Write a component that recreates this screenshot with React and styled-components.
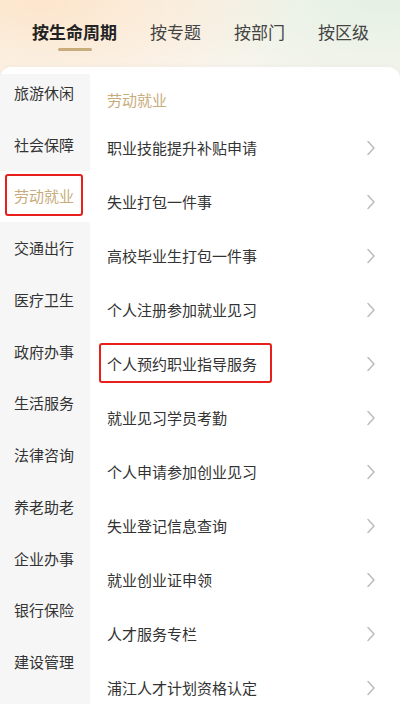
import styled, { createGlobalStyle } from "styled-components";

const GOLD = "#c8ac7c";

const tabs = ["按生命周期", "按专题", "按部门", "按区级"];

const categories = [
  "旅游休闲",
  "社会保障",
  "劳动就业",
  "交通出行",
  "医疗卫生",
  "政府办事",
  "生活服务",
  "法律咨询",
  "养老助老",
  "企业办事",
  "银行保险",
  "建设管理",
];

const services = [
  "职业技能提升补贴申请",
  "失业打包一件事",
  "高校毕业生打包一件事",
  "个人注册参加就业见习",
  "个人预约职业指导服务",
  "就业见习学员考勤",
  "个人申请参加创业见习",
  "失业登记信息查询",
  "就业创业证申领",
  "人才服务专栏",
  "浦江人才计划资格认定",
];

const Global = createGlobalStyle`
  html, body {
    margin: 0;
    padding: 0;
    background: #ffffff;
  }
  body {
    font-family: "Noto Sans CJK SC", "Noto Sans", sans-serif;
    color: #333333;
  }
`;

const Chevron = () => (
  <svg width="10" height="16" viewBox="0 0 10 16" fill="none">
    <polyline
      points="2,1.5 8,8 2,14.5"
      stroke="#bcbcbc"
      strokeWidth="1.5"
      strokeLinecap="round"
      strokeLinejoin="round"
    />
  </svg>
);

export default function App() {
  const active = 2;
  const marked = 4;

  return (
    <Page>
      <Global />
      <TabBar>
        {tabs.map((t, i) => (
          <Tab key={t} $active={i === 0}>
            {t}
          </Tab>
        ))}
      </TabBar>
      <Card>
        <Sidebar>
          {categories.map((c, i) => (
            <SideItem key={c} $active={i === active}>
              <SideLabel $marked={i === active}>{c}</SideLabel>
            </SideItem>
          ))}
        </Sidebar>
        <Content>
          <SectionTitle>{categories[active]}</SectionTitle>
          {services.map((s, i) => (
            <Row key={s}>
              <RowLabel $marked={i === marked}>{s}</RowLabel>
              <Chevron />
            </Row>
          ))}
        </Content>
      </Card>
    </Page>
  );
}

const Page = styled.div`
  width: 400px;
  height: 704px;
  overflow: hidden;
  display: flex;
  flex-direction: column;
  background:
    radial-gradient(ellipse 260px 110px at 40px 0px, rgba(253, 226, 196, 0.85), rgba(253, 226, 196, 0) 100%),
    radial-gradient(ellipse 240px 110px at 380px 0px, rgba(226, 240, 226, 0.9), rgba(226, 240, 226, 0) 100%),
    linear-gradient(#faf6f0, #f8f4ef);
`;

const TabBar = styled.div`
  height: 67px;
  flex-shrink: 0;
  display: flex;
  gap: 33px;
  padding-left: 32px;
  box-sizing: border-box;
`;

const Tab = styled.div`
  position: relative;
  padding-top: 20px;
  font-size: 17px;
  line-height: 24px;
  letter-spacing: 0;
  color: ${(p) => (p.$active ? "#222222" : "#444444")};
  font-weight: ${(p) => (p.$active ? 700 : 400)};

  &::after {
    content: "";
    display: ${(p) => (p.$active ? "block" : "none")};
    position: absolute;
    left: 50%;
    top: 48px;
    width: 34px;
    height: 3px;
    margin-left: -17px;
    border-radius: 2px;
    background: ${GOLD};
  }
`;

const Card = styled.div`
  flex: 1;
  display: flex;
  background: #ffffff;
  border-radius: 12px 12px 0 0;
  overflow: hidden;
  box-shadow: 0 -1px 6px rgba(0, 0, 0, 0.03);
`;

const Sidebar = styled.div`
  width: 90px;
  flex-shrink: 0;
  background: linear-gradient(#ffffff 7px, #f6f6f6 7px);
`;

const SideItem = styled.div`
  height: 51.75px;
  display: flex;
  align-items: center;
  padding-left: 14px;
  background: ${(p) => (p.$active ? "#ffffff" : "transparent")};
`;

const SideLabel = styled.span`
  position: relative;
  font-size: 15px;
  line-height: 22px;
  color: ${(p) => (p.$marked ? GOLD : "#333333")};

  &::after {
    content: "";
    display: ${(p) => (p.$marked ? "block" : "none")};
    position: absolute;
    left: -9px;
    right: -9px;
    top: -11px;
    bottom: -9px;
    border: 2px solid #e8201c;
    border-radius: 3px;
  }
`;

const Content = styled.div`
  flex: 1;
  padding: 22px 24px 0 17px;
`;

const SectionTitle = styled.div`
  font-size: 15px;
  line-height: 22px;
  color: ${GOLD};
  margin-bottom: 10px;
`;

const Row = styled.div`
  height: 54px;
  display: flex;
  align-items: center;
  justify-content: space-between;
`;

const RowLabel = styled.span`
  position: relative;
  font-size: 15px;
  line-height: 22px;
  color: #333333;

  &::after {
    content: "";
    display: ${(p) => (p.$marked ? "block" : "none")};
    position: absolute;
    left: -8px;
    right: -15px;
    top: -10px;
    bottom: -8px;
    border: 2px solid #e8201c;
    border-radius: 3px;
  }
`;
